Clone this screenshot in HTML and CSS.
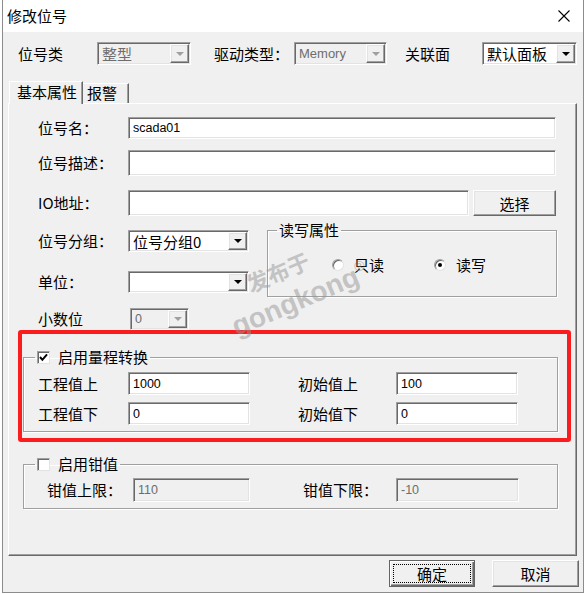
FILE: index.html
```html
<!DOCTYPE html>
<html lang="zh-CN">
<head>
    <meta charset="UTF-8">
    <title>修改位号</title>
    <link rel="stylesheet" href="styles.css">
</head>
<body>
    <div class="window">
        <div class="titlebar">
            <span class="title">修改位号</span>
            <svg class="close" width="12" height="12" viewBox="0 0 12 12">
                <path d="M0.5 0.5 L11.5 11.5 M11.5 0.5 L0.5 11.5" stroke="#000" stroke-width="1.1" fill="none"/>
            </svg>
        </div>

        <div class="toprow">
            <span class="lbl lbl-type">位号类</span>
            <div class="combo disabled c-type"><span class="val">整型</span><span class="drop"></span></div>
            <span class="lbl lbl-driver">驱动类型：</span>
            <div class="combo disabled c-driver"><span class="val latin">Memory</span><span class="drop"></span></div>
            <span class="lbl lbl-face">关联面</span>
            <div class="combo c-face"><span class="val">默认面板</span><span class="drop"></span></div>
        </div>

        <div class="tabs">
            <span class="tab active">基本属性</span>
            <span class="tab">报警</span>
        </div>

        <div class="panel">
            <div class="row r-name">
                <span class="lbl">位号名：</span>
                <div class="input"><span class="latin">scada01</span></div>
            </div>
            <div class="row r-desc">
                <span class="lbl">位号描述：</span>
                <div class="input"></div>
            </div>
            <div class="row r-io">
                <span class="lbl">IO地址：</span>
                <div class="input io"></div>
                <button class="btn pick">选择</button>
            </div>

            <div class="mid">
                <div class="mid-left">
                    <div class="row r-group">
                        <span class="lbl">位号分组：</span>
                        <div class="combo c-field"><span class="val">位号分组0</span><span class="drop"></span></div>
                    </div>
                    <div class="row r-unit">
                        <span class="lbl">单位：</span>
                        <div class="combo c-field"><span class="val"></span><span class="drop"></span></div>
                    </div>
                    <div class="row r-dec">
                        <span class="lbl">小数位</span>
                        <div class="combo disabled c-dec"><span class="val latin">0</span><span class="drop"></span></div>
                    </div>
                </div>
                <fieldset class="group rw">
                    <legend>读写属性</legend>
                    <div class="radios">
                        <label class="radio"><span class="circle"></span>只读</label>
                        <label class="radio checked"><span class="circle"></span>读写</label>
                    </div>
                </fieldset>
            </div>

            <fieldset class="group range">
                <legend><span class="check on"><svg width="9" height="9" viewBox="0 0 9 9"><path d="M1 4 L3.4 6.8 L8 1.4" stroke="#000" stroke-width="2" fill="none"/></svg></span>启用量程转换</legend>
                <div class="vrow">
                    <span class="lbl l1">工程值上</span>
                    <div class="input v"><span class="latin">1000</span></div>
                    <span class="lbl l2">初始值上</span>
                    <div class="input v"><span class="latin">100</span></div>
                </div>
                <div class="vrow">
                    <span class="lbl l1">工程值下</span>
                    <div class="input v"><span class="latin">0</span></div>
                    <span class="lbl l2">初始值下</span>
                    <div class="input v"><span class="latin">0</span></div>
                </div>
            </fieldset>

            <fieldset class="group clamp">
                <legend><span class="check"></span>启用钳值</legend>
                <div class="crow">
                    <span class="lbl l1">钳值上限：</span>
                    <div class="input disabled v1"><span class="latin">110</span></div>
                    <span class="lbl l2">钳值下限：</span>
                    <div class="input disabled v2"><span class="latin">-10</span></div>
                </div>
            </fieldset>
        </div>

        <div class="footer">
            <button class="btn default"><span class="focus">确定</span></button>
            <button class="btn cancel">取消</button>
        </div>

        <div class="redbox"></div>
        <div class="watermark">
            <div class="wm-cn">发布于</div>
            <div class="wm-en">gongkong<sup>®</sup></div>
        </div>
    </div>
</body>
</html>
```

FILE: styles.css
```css
* {
    box-sizing: border-box;
}

body {
    margin: 0;
    background-color: #fff;
    font-family: "Noto Sans CJK SC", sans-serif;
    font-size: 15px;
    line-height: 20px;
    color: #000;
}

.latin {
    font-family: "Liberation Sans", Arial, sans-serif;
    font-size: 12.5px;
}

.window {
    position: relative;
    margin-left: 2px;
    width: 582px;
    height: 593px;
    background-color: #f0f0f0;
    border: 1px solid #8c8c8c;
    border-top: none;
    display: flex;
    flex-direction: column;
}

/* title bar */
.titlebar {
    height: 32px;
    background-color: #fff;
    display: flex;
    align-items: center;
    justify-content: space-between;
    padding: 0 13px 0 4px;
}

.title {
    font-size: 15px;
}

/* top row */
.toprow {
    display: flex;
    align-items: center;
    height: 23px;
    margin-top: 10px;
    padding-left: 15px;
}

.lbl-type { width: 79px; }
.lbl-driver { width: 80px; margin-left: 23px; }
.lbl-face { width: 77px; margin-left: 18px; }
.c-type { width: 94px; }
.c-driver { width: 93px; }
.c-driver .latin { font-size: 13px; }
.c-face { width: 95px; }

/* combo box */
.combo {
    display: flex;
    height: 23px;
    background-color: #fff;
    border: 1px solid;
    border-color: #a0a0a0 #fff #fff #a0a0a0;
    box-shadow: inset 1px 1px 0 #696969, inset -1px -1px 0 #e3e3e3;
    padding: 1px;
}

.combo .val {
    flex: 1;
    padding-left: 3px;
    line-height: 19px;
    white-space: nowrap;
}

.combo .drop {
    width: 19px;
    display: flex;
    align-items: center;
    justify-content: center;
    background-color: #f0f0f0;
    border: 1px solid;
    border-color: #fff #696969 #696969 #fff;
    box-shadow: inset -1px -1px 0 #a0a0a0, inset 1px 1px 0 #e3e3e3;
}

.combo .drop::after {
    content: "";
    border-left: 4px solid transparent;
    border-right: 4px solid transparent;
    border-top: 4px solid #000;
}

.combo.disabled {
    background-color: #f0f0f0;
    color: #6d6d6d;
}

.combo.disabled .drop::after {
    border-top-color: #a0a0a0;
}

/* tabs */
.tabs {
    display: flex;
    align-items: flex-end;
    height: 22px;
    margin-top: 16px;
    padding-left: 6px;
}

.tab {
    height: 20px;
    width: 46px;
    padding-left: 4px;
    line-height: 17px;
    border-top: 1px solid #fff;
    border-right: 1px solid #696969;
    box-shadow: inset -1px 0 0 #a0a0a0;
}

.tab.active {
    position: relative;
    z-index: 1;
    width: 74px;
    height: 23px;
    margin-bottom: -1px;
    padding-left: 7px;
    line-height: 20px;
    background-color: #f0f0f0;
    border-left: 1px solid #fff;
}

/* panel */
.panel {
    margin-left: 5px;
    width: 569px;
    height: 453px;
    border: 1px solid;
    border-color: #fff #696969 #696969 #fff;
    box-shadow: inset -1px -1px 0 #a0a0a0;
    padding-top: 13px;
}

.row {
    display: flex;
    align-items: center;
    margin-left: 29px;
    width: 518px;
}

.row .lbl {
    width: 90px;
    flex-shrink: 0;
}

.input {
    height: 22px;
    flex: 1;
    background-color: #fff;
    border: 1px solid;
    border-color: #a0a0a0 #fff #fff #a0a0a0;
    box-shadow: inset 1px 1px 0 #696969, inset -1px -1px 0 #e3e3e3;
    padding-left: 4px;
    display: flex;
    align-items: center;
}

.input.disabled {
    background-color: #f0f0f0;
    color: #6d6d6d;
}

.r-name { height: 22px; }
.r-desc { height: 26px; margin-top: 11px; }
.r-desc .input { height: 26px; }
.r-io { height: 26px; margin-top: 14px; }
.r-io .input { height: 26px; flex: none; width: 341px; }

.btn {
    font-family: "Noto Sans CJK SC", sans-serif;
    font-size: 15px;
    color: #000;
    background-color: #f0f0f0;
    border: 1px solid;
    border-color: #fff #696969 #696969 #fff;
    box-shadow: inset -1px -1px 0 #a0a0a0, inset 1px 1px 0 #e3e3e3;
    padding: 0;
}

.pick {
    width: 83px;
    height: 26px;
    margin-left: 4px;
}

.mid {
    display: flex;
    margin-left: 29px;
    margin-top: 6px;
}

.mid-left {
    width: 229px;
    padding-top: 8px;
}

.mid-left .row {
    margin-left: 0;
    width: 229px;
    height: 22px;
}

.c-field { width: 121px; height: 22px; }
.c-dec { width: 59px; height: 22px; margin-left: 2px; }
.r-unit { margin-top: 19px; }
.r-dec { margin-top: 15px; }

/* group boxes */
.group {
    margin: 0;
    padding: 0;
    min-width: 0;
    border: 1px solid #a0a0a0;
    box-shadow: 1px 1px 0 #fff, inset 1px 1px 0 #fff;
}

.group legend {
    padding: 0 2px;
    margin-left: 9px;
    line-height: 16px;
    height: 16px;
    display: flex;
    align-items: center;
}

.rw {
    width: 290px;
    height: 75px;
    padding-bottom: 4px;
}

.radios {
    display: flex;
    align-items: center;
    height: 100%;
    padding-left: 64px;
}

.radio {
    display: flex;
    align-items: center;
}

.radio + .radio {
    margin-left: 50px;
}

.circle {
    width: 12px;
    height: 12px;
    margin-right: 10px;
    border-radius: 50%;
    background-color: #fff;
    border: 1px solid;
    border-color: #a0a0a0 #e3e3e3 #e3e3e3 #a0a0a0;
    box-shadow: inset 1px 1px 0 #696969;
    display: flex;
    align-items: center;
    justify-content: center;
}

.radio.checked .circle::after {
    content: "";
    width: 4px;
    height: 4px;
    border-radius: 50%;
    background-color: #000;
}

.check {
    width: 13px;
    height: 13px;
    margin-right: 8px;
    background-color: #fff;
    border: 1px solid;
    border-color: #a0a0a0 #e3e3e3 #e3e3e3 #a0a0a0;
    box-shadow: inset 1px 1px 0 #696969;
    display: flex;
    align-items: center;
    justify-content: center;
}

.range {
    width: 535px;
    margin: 19px 0 0 14px;
    padding: 7px 0 6px 0;
}

.range legend,
.clamp legend {
    margin-left: 11px;
}

.vrow {
    display: flex;
    align-items: center;
    height: 23px;
    margin-left: 14px;
}

.vrow + .vrow {
    margin-top: 7px;
}

.vrow .lbl.l1 { width: 90px; }
.vrow .lbl.l2 { width: 98px; margin-left: 48px; }
.vrow .input { flex: none; width: 122px; height: 23px; }

.clamp {
    width: 535px;
    margin: 24px 0 0 14px;
    padding: 6px 0 6px 0;
}

.crow {
    display: flex;
    align-items: center;
    height: 24px;
    margin-left: 23px;
}

.crow .lbl.l1 { width: 86px; }
.crow .lbl.l2 { width: 93px; margin-left: 53px; }
.crow .input { flex: none; height: 24px; }
.crow .v1 { width: 117px; }
.crow .v2 { width: 123px; }

/* dialog buttons */
.footer {
    display: flex;
    justify-content: flex-end;
    gap: 17px;
    margin-top: 4px;
    padding-right: 4px;
}

.footer .btn {
    height: 27px;
    width: 87px;
}

.btn.default {
    width: 86px;
    border: 1px solid #646464;
    box-shadow: inset 1px 1px 0 #fff, inset -1px -1px 0 #696969, inset -2px -2px 0 #a0a0a0;
    padding: 3px;
}

.btn.default .focus {
    display: block;
    height: 100%;
    border: 1px dotted #000;
    line-height: 17px;
}

/* annotation and watermark */
.redbox {
    position: absolute;
    left: 15px;
    top: 330px;
    width: 553px;
    height: 112px;
    border: 4px solid #fb1d1d;
    border-radius: 3px;
}

.watermark {
    position: absolute;
    left: 218px;
    top: 253px;
    width: 150px;
    transform: rotate(-23deg);
    color: rgba(150, 150, 150, 0.5);
    font-weight: bold;
    pointer-events: none;
}

.wm-cn {
    font-size: 22px;
    line-height: 24px;
    padding-left: 30px;
}

.wm-en {
    font-family: "Liberation Sans", Arial, sans-serif;
    font-size: 28px;
    line-height: 30px;
    white-space: nowrap;
}

.wm-en sup {
    font-size: 14px;
    font-weight: normal;
    color: rgba(130, 130, 130, 0.6);
    vertical-align: 12px;
}
```
